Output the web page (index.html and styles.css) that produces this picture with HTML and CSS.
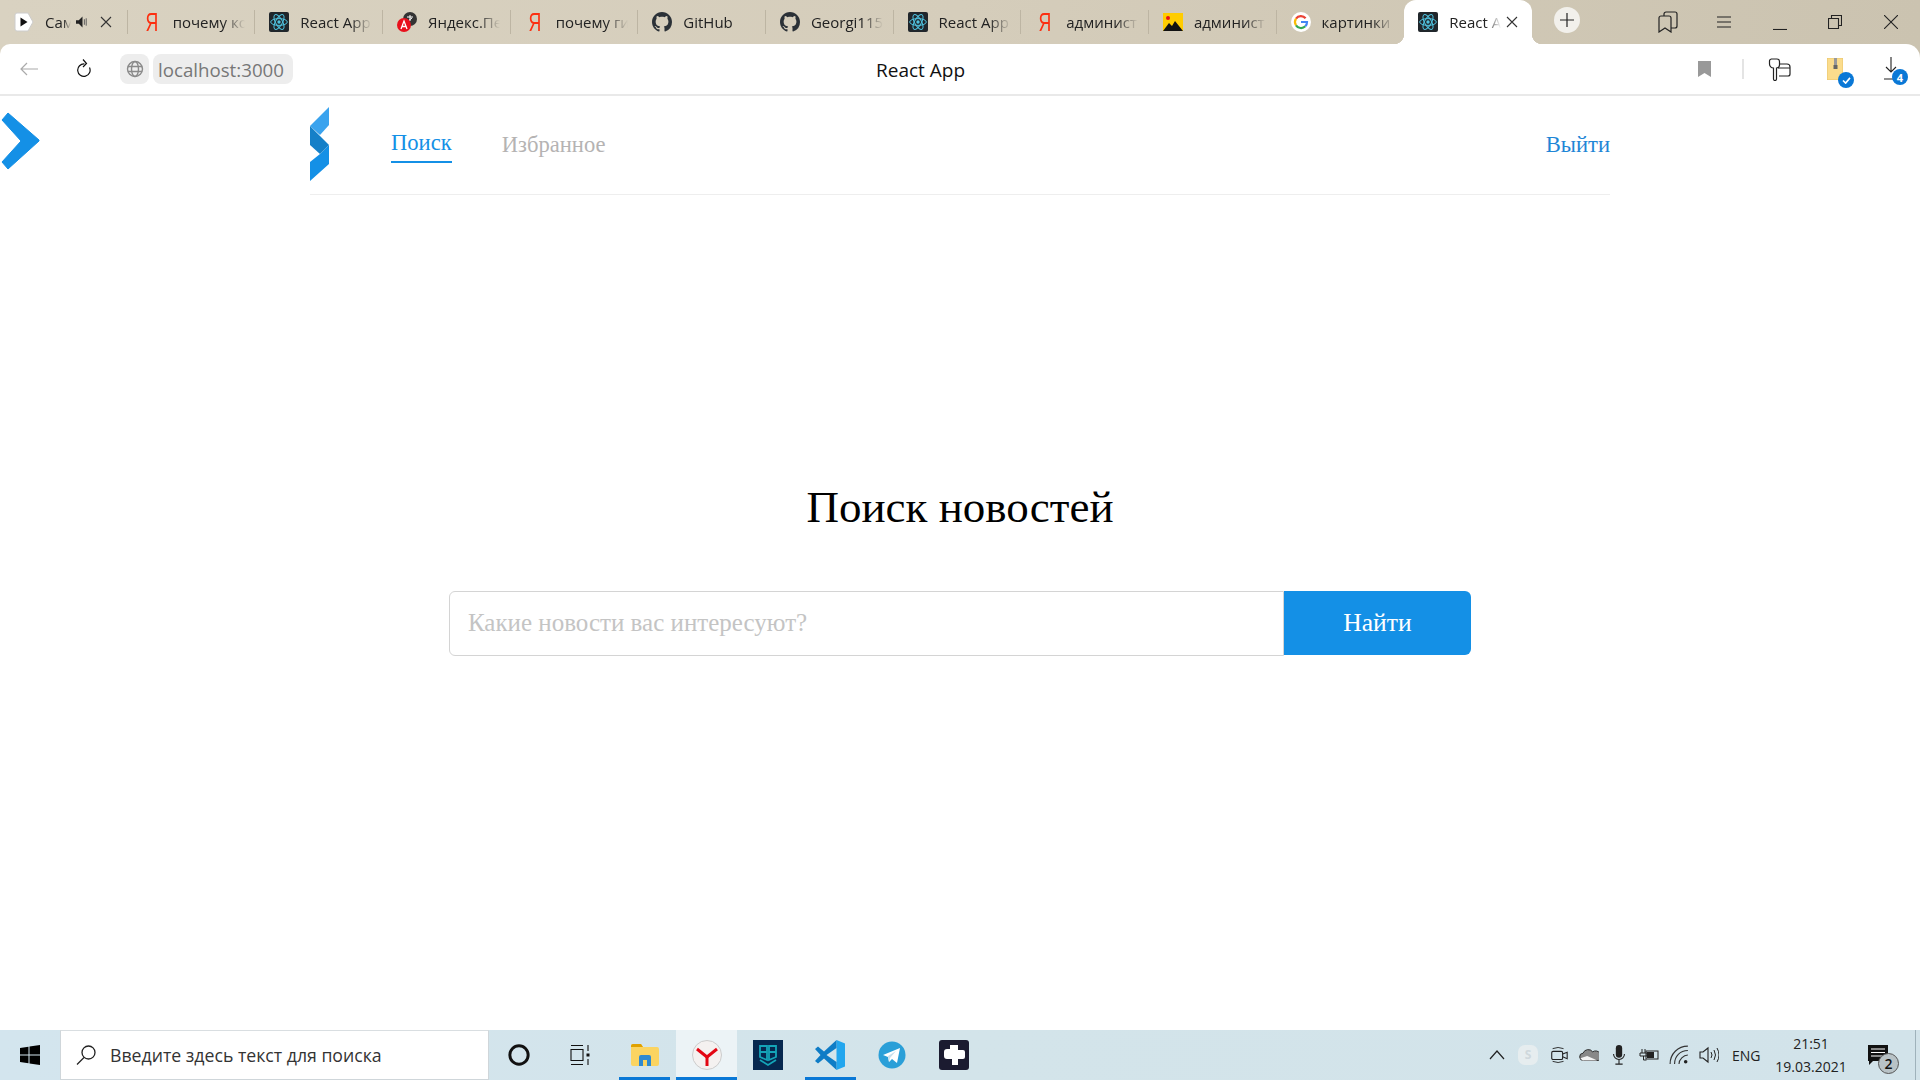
FILE: index.html
```html
<!DOCTYPE html>
<html lang="ru">
<head>
<meta charset="utf-8">
<title>React App</title>
<link rel="stylesheet" href="styles.css">
</head>
<body>
<svg class="defs" width="0" height="0">
  <symbol id="react" viewBox="0 0 20 20">
    <rect width="20" height="20" rx="2" fill="#20262b"/>
    <g fill="none" stroke="#4fc3e0" stroke-width="1">
      <ellipse cx="10" cy="10" rx="8.3" ry="3.4"/>
      <ellipse cx="10" cy="10" rx="8.3" ry="3.4" transform="rotate(60 10 10)"/>
      <ellipse cx="10" cy="10" rx="8.3" ry="3.4" transform="rotate(120 10 10)"/>
    </g>
    <circle cx="10" cy="10" r="1.7" fill="#4fc3e0"/>
  </symbol>
  <symbol id="github" viewBox="0 0 16 16">
    <path fill="#2b3137" d="M8 0C3.58 0 0 3.58 0 8c0 3.54 2.29 6.53 5.47 7.59.4.07.55-.17.55-.38 0-.19-.01-.82-.01-1.49-2.01.37-2.53-.49-2.69-.94-.09-.23-.48-.94-.82-1.13-.28-.15-.68-.52-.01-.53.63-.01 1.08.58 1.23.82.72 1.21 1.87.87 2.33.66.07-.52.28-.87.51-1.07-1.78-.2-3.64-.89-3.64-3.95 0-.87.31-1.59.82-2.15-.08-.2-.36-1.02.08-2.12 0 0 .67-.21 2.2.82.64-.18 1.32-.27 2-.27.68 0 1.36.09 2 .27 1.53-1.04 2.2-.82 2.2-.82.44 1.1.16 1.92.08 2.12.51.56.82 1.27.82 2.15 0 3.07-1.87 3.75-3.65 3.95.29.25.54.73.54 1.48 0 1.07-.01 1.93-.01 2.2 0 .21.15.46.55.38A8.013 8.013 0 0016 8c0-4.42-3.58-8-8-8z"/>
  </symbol>
  <symbol id="close" viewBox="0 0 12 12">
    <path d="M1 1l10 10M11 1L1 11" stroke="#333" stroke-width="1.1" fill="none"/>
  </symbol>
</svg>

<div class="window">
  <div class="tabbar">
    <div class="tabs">
      <div class="tab"><div class="tab-in">
        <svg class="fav" viewBox="0 0 20 20"><path d="M3 1h11l5 9-5 9H3a2 2 0 01-2-2V3a2 2 0 012-2z" fill="#fff" stroke="#ccc"/><path d="M6.5 5.5l7 4.5-7 4.5z" fill="#111"/></svg>
        <span class="tab-title tab-short">Сам</span>
        <svg class="speaker" viewBox="0 0 14 12"><path d="M0 4h3l4-4v12l-4-4H0z" fill="#222"/><path d="M9 3v6M11 2v8" stroke="#555" fill="none"/></svg>
        <svg class="tab-x"><use href="#close"/></svg>
      </div></div>
      <div class="tab"><div class="tab-in"><span class="ya fav">Я</span><span class="tab-title">почему когда</span></div></div>
      <div class="tab"><div class="tab-in"><svg class="fav"><use href="#react"/></svg><span class="tab-title">React App</span></div></div>
      <div class="tab"><div class="tab-in">
        <svg class="fav" viewBox="0 0 20 20"><circle cx="13" cy="7" r="7" fill="#333"/><path d="M10 5h6M13 3v6M11 9l4-3" stroke="#fff" fill="none"/><circle cx="7" cy="13" r="7" fill="#e8101c"/><path d="M4 17l3-8 3 8M5 14.500h4" stroke="#fff" stroke-width="1.300" fill="none"/></svg>
        <span class="tab-title">Яндекс.Переводчик</span></div></div>
      <div class="tab"><div class="tab-in"><span class="ya fav">Я</span><span class="tab-title">почему гит</span></div></div>
      <div class="tab"><div class="tab-in"><svg class="fav"><use href="#github"/></svg><span class="tab-title">GitHub</span></div></div>
      <div class="tab"><div class="tab-in"><svg class="fav"><use href="#github"/></svg><span class="tab-title">Georgi115</span></div></div>
      <div class="tab"><div class="tab-in"><svg class="fav"><use href="#react"/></svg><span class="tab-title">React App</span></div></div>
      <div class="tab"><div class="tab-in"><span class="ya fav">Я</span><span class="tab-title">администратор</span></div></div>
      <div class="tab"><div class="tab-in">
        <svg class="fav" viewBox="0 0 20 20"><rect y="1" width="20" height="18" fill="#ffcc00"/><path d="M0 19l6-8 3 3 3-5 8 10z" fill="#111"/><circle cx="5" cy="6" r="2" fill="#e8101c"/></svg>
        <span class="tab-title">администратор</span></div></div>
      <div class="tab"><div class="tab-in tab-in-last">
        <svg class="fav" viewBox="0 0 20 20"><circle cx="10" cy="10" r="10" fill="#fff"/><path d="M14.600 6.300A6 6 0 005 6.700" stroke="#ea4335" stroke-width="2.200" fill="none"/><path d="M5 6.700a6 6 0 000 6.600" stroke="#fbbc05" stroke-width="2.200" fill="none"/><path d="M5 13.300a6 6 0 009.300 1" stroke="#34a853" stroke-width="2.200" fill="none"/><path d="M14.300 14.300A6 6 0 0016 10h-6" stroke="#4285f4" stroke-width="2.200" fill="none"/></svg>
        <span class="tab-title">картинки</span></div></div>
      <div class="tab tab-active"><div class="tab-in tab-in-last">
        <svg class="fav"><use href="#react"/></svg>
        <span class="tab-title tab-short-active">React App</span>
        <svg class="tab-x"><use href="#close"/></svg>
      </div></div>
    </div>
    <div class="newtab"><svg viewBox="0 0 14 14"><path d="M7 0v14M0 7h14" stroke="#222" stroke-width="1.200"/></svg></div>
    <div class="winctl">
      <div class="wc"><svg viewBox="0 0 20 22" class="wc-i20"><path d="M1 21V7a2 2 0 012-2h8a2 2 0 012 2v14l-6-4z M6 5V3a2 2 0 012-2h9a2 2 0 012 2v12a2 2 0 01-2 2h-4" fill="none" stroke="#222" stroke-width="1.200"/></svg></div>
      <div class="wc"><svg viewBox="0 0 14 12" class="wc-i14"><path d="M0 1h14M0 6h14M0 11h14" stroke="#222" stroke-width="1.100"/></svg></div>
      <div class="wc"><svg viewBox="0 0 14 14" class="wc-min"><path d="M0 13.500h14" stroke="#222" stroke-width="1.100"/></svg></div>
      <div class="wc"><svg viewBox="0 0 14 14" class="wc-i14"><path d="M.5 3.500h10v10H.5zM3.500 3.500v-3h10v10h-3" fill="none" stroke="#222" stroke-width="1.100"/></svg></div>
      <div class="wc"><svg viewBox="0 0 14 14" class="wc-i14"><path d="M0 0l14 14M14 0L0 14" stroke="#222" stroke-width="1.100"/></svg></div>
    </div>
  </div>

  <div class="toolbar">
    <div class="tb-left">
      <svg class="tb-back" viewBox="0 0 18 14"><path d="M18 7H1M7 1L1 7l6 6" fill="none" stroke="#aaa" stroke-width="1.200"/></svg>
      <svg class="tb-reload" viewBox="0 0 16 20"><path d="M12.500 8.500A6.200 6.200 0 1 1 7.500 5" fill="none" stroke="#111" stroke-width="1.200"/><path d="M6 .5L9.500 4.500 6 8" fill="none" stroke="#111" stroke-width="1.200"/></svg>
      <div class="globe-pill"><svg viewBox="0 0 18 18"><g fill="none" stroke="#8a8a8a" stroke-width="1.400"><circle cx="9" cy="9" r="7.500"/><ellipse cx="9" cy="9" rx="3.500" ry="7.500"/><path d="M2 6.500h14M2 11.500h14"/></g></svg></div>
      <div class="url-pill">localhost:3000</div>
    </div>
    <div class="tb-title">React App</div>
    <div class="tb-right">
      <svg class="ic-mark" viewBox="0 0 13 16"><path d="M0 0h13v16l-6.500-4L0 16z" fill="#999"/></svg>
      <div class="tb-sep"></div>
      <svg class="ic-keys" viewBox="0 0 23 23"><path d="M9 6h10a3 3 0 013 3v7a2 2 0 01-2 2h-9M10 10h12" fill="none" stroke="#222" stroke-width="1.200"/><path d="M3 1h6a2.500 2.500 0 012.500 2.500V7a3 3 0 01-3 3v11a1.500 1.500 0 01-3 0V10a4 4 0 01-4-4V3a2 2 0 012-2z" fill="#fff" stroke="#222" stroke-width="1.200"/></svg>
      <div class="ic-zip">
        <svg viewBox="0 0 16 22" class="zip-svg"><rect width="16" height="22" fill="#fbdc8c" stroke="#e8c46c"/><rect x="7" y="0" width="3" height="10" fill="#999"/><rect x="6.500" y="7" width="4" height="4" fill="#666"/></svg>
        <span class="badge"><svg viewBox="0 0 10 8"><path d="M1 4l3 3 5-6" fill="none" stroke="#fff" stroke-width="1.800"/></svg></span>
      </div>
      <div class="ic-dl">
        <svg viewBox="0 0 14 24" class="dl-svg"><path d="M7 0v15M2 10l5 5 5-5M0 22h14" fill="none" stroke="#222" stroke-width="1.100"/></svg>
        <span class="badge badge-num">4</span>
      </div>
    </div>
  </div>

  <div class="page">
    <svg class="side-toggle" viewBox="0 0 40 58"><path d="M8 1l31 27-0 1L8 57l-6-7 19-21L2 8z" fill="#1490e6" stroke="#1490e6" stroke-linejoin="round"/></svg>
    <header class="site-header">
      <svg class="logo" viewBox="0 0 19 74">
        <path d="M19 0v18l-9 10-10-9z" fill="#3aa3ee"/>
        <path d="M19 38v19L0 74V55l10-8z" fill="#1490e6"/>
        <path d="M0 19l19 19-9 9-10-9z" fill="#1580c8"/>
      </svg>
      <nav class="nav">
        <a class="nav-link nav-active">Поиск</a>
        <a class="nav-link">Избранное</a>
      </nav>
      <a class="logout">Выйти</a>
    </header>
    <main class="search">
      <h1 class="search-title">Поиск новостей</h1>
      <form class="search-form">
        <input class="search-input" placeholder="Какие новости вас интересуют?">
        <button class="search-btn" type="button">Найти</button>
      </form>
    </main>
  </div>

  <div class="taskbar">
    <div class="start"><svg viewBox="0 0 20 20"><path d="M0 3l8.500-1.200V9.500H0zM9.500 1.600L20 0v9.500H9.500zM0 10.500h8.500v7.700L0 17zM9.500 10.500H20V20L9.500 18.400z" fill="#000"/></svg></div>
    <div class="tb-search">
      <svg viewBox="0 0 20 20"><circle cx="12.500" cy="7.500" r="6.500" fill="none" stroke="#222" stroke-width="1.300"/><path d="M8 12.500L1 19.500" stroke="#222" stroke-width="1.300"/></svg>
      <span>Введите здесь текст для поиска</span>
    </div>
    <div class="task-slot slot-cortana"><svg class="ic18" viewBox="0 0 18 18"><circle cx="9" cy="9" r="7.500" fill="none" stroke="#111" stroke-width="2.400"/></svg></div>
    <div class="task-slot slot-view"><svg class="ic20" viewBox="0 0 20 20"><path d="M1 .5h12M1 19.500h12M1 4.500h12v11H1zM18 0v6M18 14v6" fill="none" stroke="#111" stroke-width="1.100"/><rect x="16.500" y="8.500" width="3" height="3" fill="#111"/></svg></div>
    <div class="task-slot slot-app slot-ex task-on"><svg class="ic-ex" viewBox="0 0 28 22"><path d="M0 2a2 2 0 012-2h8l2 3h14a2 2 0 012 2v15a2 2 0 01-2 2H2a2 2 0 01-2-2z" fill="#fbd461"/><path d="M0 2a2 2 0 012-2h8l2 3H0z" fill="#e0a100"/><path d="M8 22v-9a2 2 0 012-2h8a2 2 0 012 2v9h-4v-6h-4v6z" fill="#2f8ad1"/></svg></div>
    <div class="task-slot slot-ya task-on task-hover"><svg class="ic30" viewBox="0 0 30 30"><circle cx="15" cy="15" r="14.500" fill="#f4f1f0" stroke="#ccc"/><path d="M5 9l10 8 10-8" fill="none" stroke="#e30613" stroke-width="3"/><path d="M15 16v10" stroke="#e30613" stroke-width="3"/></svg></div>
    <div class="task-slot slot-app"><svg class="ic30" viewBox="0 0 30 30"><rect width="30" height="30" fill="#06284f"/><path d="M7 6h7v14l-7-3zM16 6h7v11l-7 3zM7 12h7M16 12h7M7 20l8 5 8-5" fill="none" stroke="#14a5b8" stroke-width="1.800"/></svg></div>
    <div class="task-slot slot-app task-on"><svg class="ic30" viewBox="0 0 30 30"><path d="M21.500 0L30 3.500v23L21.500 30z" fill="#22a6ee"/><path d="M21.500 0v8l-10 7 10 7v8L9 18.500 3 23.500 0 21l5.500-6L0 9l3-2.500 6 5z" fill="#0e7cc6"/></svg></div>
    <div class="task-slot slot-app"><svg class="ic28" viewBox="0 0 28 28"><circle cx="14" cy="14" r="13.500" fill="#2a9fd8"/><path d="M5 14l17-7-3 15-5-4-3 3-1-5z" fill="#fff"/><path d="M11 21l-1-6 8-5-6 7z" fill="#c8dfec"/></svg></div>
    <div class="task-slot slot-app"><svg class="ic30" viewBox="0 0 30 30"><rect width="30" height="30" rx="3" fill="#1b1b30"/><path d="M11 5h8v5h5a2 2 0 012 2v5a2 2 0 01-2 2h-5v6h-6v-6H8a3 3 0 01-3-3v-4a3 3 0 013-3h3z" fill="#fff"/></svg></div>

    <div class="tray">
      <svg class="t-chev" viewBox="0 0 16 10"><path d="M1 9l7-8 7 8" fill="none" stroke="#222" stroke-width="1.200"/></svg>
      <div class="t-skype">S</div>
      <svg class="t-ic" viewBox="0 0 20 22"><path d="M3 4a8 3 0 0112 0M3 18a8 3 0 0012 0" fill="none" stroke="#222"/><rect x="2" y="7" width="12" height="9" rx="1.500" fill="none" stroke="#222" stroke-width="1.200"/><path d="M14 10l5-2v7l-5-2" fill="none" stroke="#222" stroke-width="1.200"/></svg>
      <svg class="t-ic" viewBox="0 0 22 14"><path d="M5 13a4 4 0 01-.500-8A6 6 0 0115 3.500a5 5 0 016.500 9.500z" fill="#888" stroke="#222"/><path d="M1.500 10.500L9 8l7 3 4 2H4z" fill="#f4f4f4"/></svg>
      <svg class="t-ic" viewBox="0 0 14 22"><rect x="3.500" y="0" width="7" height="14" rx="3.500" fill="#222"/><path d="M1 10a6 6 0 0012 0M7 16v5M3 21h8" fill="none" stroke="#222" stroke-width="1.200"/></svg>
      <svg class="t-ic" viewBox="0 0 20 14"><path d="M3 1v4M6 1v4M1 5h7v3H1zM4.500 8v4h3" fill="none" stroke="#222"/><rect x="7" y="3" width="12" height="8" fill="none" stroke="#222"/><rect x="8" y="4" width="7" height="6" fill="#222"/></svg>
      <svg class="t-ic" viewBox="0 0 18 18"><path d="M1 17C1 8 8 1 17 1M5 17C5 10 10 5 17 5M9 17c0-4 4-8 8-8" fill="none" stroke="#333"/><circle cx="15" cy="15" r="1.600" fill="#222"/></svg>
      <svg class="t-ic" viewBox="0 0 20 18"><path d="M1 6h3l5-4v14l-5-4H1z" fill="none" stroke="#222" stroke-width="1.100"/><path d="M12 6q2 3 0 6M15 4q3 5 0 10M18 2q4 7 0 14" fill="none" stroke="#222"/></svg>
      <span class="t-lang">ENG</span>
      <div class="t-clock"><span>21:51</span><span>19.03.2021</span></div>
      <div class="t-note">
        <svg viewBox="0 0 20 20"><path d="M0 0h20v16H5l-4 4v-4H0z" fill="#111"/><path d="M3 4h14M3 7.500h14M3 11h14" stroke="#fff"/></svg>
        <span class="t-count">2</span>
      </div>
      <div class="t-show"></div>
    </div>
  </div>
</div>
</body>
</html>
```

FILE: styles.css
```css
* { box-sizing: border-box; }
html, body { margin: 0; padding: 0; height: 100%; overflow: hidden; background: #fff; }
.defs { position: absolute; }
.window {
  width: 1920px; height: 1080px; display: flex; flex-direction: column;
  font-family: "Open Sans", "Noto Sans", sans-serif;
  background: linear-gradient(90deg, #d9d2c1 0%, #d5cdbb 50%, #cbc3b0 100%);
}

/* tab strip */
.tabbar { height: 44px; display: flex; flex: none; }
.tabs { display: flex; width: 1532px; flex: none; }
.tab { width: 127.670px; flex: none; height: 44px; display: flex; align-items: center; }
.tab-in {
  width: 100%; height: 24px; display: flex; align-items: center;
  border-right: 1px solid #bdb5a3; padding-left: 14px; margin-top: -1px;
}
.tab-in-last { border-right: none; }
.fav { width: 20px; height: 20px; flex: none; }
.ya {
  color: #fc2f10; font: 26px/20px "Liberation Sans", sans-serif; text-align: center; display: block;
  transform: scaleX(.68);
}
.tab-title {
  flex: none; overflow: hidden; white-space: nowrap;
  font-size: 15px; color: #222;
  -webkit-mask-image: linear-gradient(90deg, #000 70%, transparent 100%);
  mask-image: linear-gradient(90deg, #000 70%, transparent 100%);
}
.tab-in .fav + .tab-title { margin-left: 11px; width: 72px; }
.tab-in .fav + .tab-short { margin-left: 11px; width: 26px; }
.speaker { width: 13px; height: 12px; flex: none; margin-left: 5px; }
.tab-x { width: 12px; height: 12px; flex: none; margin-left: 11px; }
.tab-active { background: #fff; border-radius: 12px 12px 0 0; position: relative; width: 128px; }
.tab-active::before, .tab-active::after {
  content: ""; position: absolute; bottom: 0; width: 10px; height: 10px;
}
.tab-active::before { left: -10px; background: radial-gradient(circle at 0 0, transparent 10px, #fff 10.500px); }
.tab-active::after { right: -10px; background: radial-gradient(circle at 100% 0, transparent 10px, #fff 10.500px); }
.tab-active .tab-in { padding-left: 14px; }
.tab-active .fav + .tab-short-active { margin-left: 11px; width: 52px; }
.tab-active .tab-x { margin-left: 5px; }
.newtab {
  width: 26px; height: 26px; border-radius: 50%; background: #f2f0eb; margin: 7px 0 0 22px;
  display: flex; align-items: center; justify-content: center; flex: none;
}
.newtab svg { width: 14px; height: 14px; }
.winctl { margin-left: auto; padding-right: 1px; display: flex; height: 44px; }
.wc { width: 55.700px; display: flex; align-items: center; justify-content: center; }
.wc-i20 { width: 20px; height: 22px; }
.wc-i14 { width: 14px; height: 14px; }
.wc-min { width: 14px; height: 14px; margin-top: 2px; }

/* toolbar */
.toolbar {
  height: 52px; flex: none; background: #fff; border-radius: 10px 14px 0 0;
  border-bottom: 2px solid #e9e9e9; display: flex; align-items: center;
}
.tb-left { width: 876px; display: flex; align-items: center; flex: none; padding-left: 20px; }
.tb-back { width: 18px; height: 14px; flex: none; }
.tb-reload { width: 16px; height: 20px; flex: none; margin-left: 39px; }
.globe-pill {
  width: 29px; height: 30px; border-radius: 8px; background: #ededed; margin-left: 27px;
  display: flex; align-items: center; justify-content: center; flex: none;
}
.globe-pill svg { width: 18px; height: 18px; }
.url-pill {
  width: 140px; height: 30px; background: #ededed; border-radius: 8px; margin-left: 4px;
  font-size: 18.700px; line-height: 31px; color: #777; padding-left: 5px; white-space: nowrap;
}
.tb-title { font-size: 19px; line-height: 28px; padding-top: 1px; color: #111; white-space: nowrap; }
.tb-right { margin-left: auto; display: flex; align-items: center; padding-right: 10px; }
.ic-mark { width: 13px; height: 16px; flex: none; }
.tb-sep { width: 2px; height: 20px; background: #e4e4e4; margin-left: 31px; }
.ic-keys { width: 23px; height: 23px; flex: none; margin-left: 24px; }
.ic-zip { position: relative; margin-left: 36px; width: 16px; height: 22px; }
.zip-svg { width: 16px; height: 22px; display: block; }
.ic-dl { position: relative; margin-left: 41px; width: 14px; height: 24px; margin-right: 12px; }
.dl-svg { width: 14px; height: 24px; display: block; }
.badge {
  position: absolute; width: 16px; height: 16px; border-radius: 50%; background: #0a78d6;
  left: 11px; top: 14px; display: flex; align-items: center; justify-content: center;
  color: #fff; font-size: 11px; font-weight: 700;
}
.badge svg { width: 9px; height: 7px; }
.badge-num { left: 8px; top: 12px; }

/* page */
.page { flex: 1; background: #fff; position: relative; font-family: "Liberation Serif", serif; display: flex; flex-direction: column; min-height: 0; }
.side-toggle { position: absolute; left: 0; top: 16px; width: 40px; height: 58px; }
.site-header {
  width: 1300px; margin: 0 auto; height: 99px; flex: none; border-bottom: 1px solid #eee;
  display: flex; align-items: flex-start; padding-top: 11px;
}
.logo { width: 19px; height: 74px; flex: none; }
.nav { display: flex; gap: 50px; margin-left: 62px; margin-top: 24px; }
.nav-link { font-size: 22.600px; line-height: 26px; color: #b5b3b3; height: 36px; padding-top: 1px; }
.nav-active { color: #1490e6; border-bottom: 2px solid #1490e6; height: 34px; margin-top: -2px; }
.logout { margin-left: auto; font-size: 22.600px; line-height: 26px; color: #1f86d6; margin-top: 25px; }
.search { display: flex; flex-direction: column; align-items: center; padding-top: 286px; }
.search-title { margin: 0; font-size: 45px; line-height: 52px; font-weight: 400; color: #000; }
.search-form { display: flex; margin-top: 58px; width: 1022px; height: 65px; align-items: flex-start; }
.search-input {
  flex: 1; min-width: 0; height: 65px; border: 1px solid #d4d4d4; border-radius: 6px 0 0 6px;
  font: 25px "Liberation Serif", serif; padding: 0 18px 2px; outline: none; background: #fff;
}
.search-input::placeholder { color: #c4c4c4; opacity: 1; }
.search-btn {
  width: 187px; flex: none; height: 64px; border: 0; background: #1490e6; color: #fff;
  border-radius: 0 6px 6px 0; font: 400 25.600px "Liberation Serif", serif; padding: 0;
}

/* taskbar */
.taskbar {
  height: 50px; flex: none; display: flex; align-items: stretch;
  background: linear-gradient(90deg, #d3e5ee 0%, #d3e4ea 50%, #d2e3ea 100%);
}
.start { width: 60px; display: flex; align-items: center; justify-content: center; flex: none; }
.start svg { width: 20px; height: 20px; }
.tb-search {
  width: 429px; flex: none; background: #fff; border: 1px solid #cfd6da; border-top-color: #d9dee1;
  display: flex; align-items: center; padding-left: 15px;
}
.tb-search svg { width: 20px; height: 20px; flex: none; }
.tb-search span { margin-left: 14px; font-size: 17.700px; color: #333; white-space: nowrap; }
.task-slot { display: flex; align-items: center; justify-content: center; flex: none; }
.slot-cortana { width: 60px; }
.slot-view { width: 62px; margin-right: 8px; }
.slot-app { width: 51px; margin-right: 11px; border-bottom: 3px solid transparent; padding-top: 2px; }
.slot-ex { margin-right: 6px; }
.slot-ya { width: 61px; margin-right: 5.500px; border-bottom: 3px solid transparent; padding-top: 2px; }
.task-on { border-bottom-color: #0a78d6; }
.task-hover { background: #ecf3f6; }
.ic18 { width: 22px; height: 22px; }
.ic20 { width: 20px; height: 20px; }
.ic-ex { width: 28px; height: 22px; }
.ic30 { width: 30px; height: 30px; }
.ic28 { width: 28px; height: 28px; }

.tray { margin-left: auto; display: flex; align-items: center; height: 50px; }
.t-chev { width: 16px; height: 10px; flex: none; margin-right: 13px; }
.t-skype {
  width: 20px; height: 20px; border-radius: 7px; background: #e6edef; color: #cfd8dc;
  font: 700 12px/20px "Open Sans", sans-serif; text-align: center; flex: none; margin-right: 11px;
}
.t-ic { width: 20px; height: 20px; flex: none; margin-right: 10px; }
.t-lang { font-size: 14px; color: #222; margin-left: 3px; width: 27px; flex: none; }
.t-clock {
  width: 90px; flex: none; margin-left: 7px; display: flex; flex-direction: column; align-items: center;
  font-size: 14px; line-height: 23px; color: #222;
}
.t-note { position: relative; width: 20px; height: 20px; margin-left: 12px; flex: none; }
.t-note svg { width: 20px; height: 20px; display: block; }
.t-count {
  position: absolute; left: 10px; top: 8px; width: 21px; height: 21px; border-radius: 50%;
  background: #b8c2c6; border: 1px solid #555; color: #111; font-size: 14px; font-weight: 600;
  display: flex; align-items: center; justify-content: center;
}
.t-show { width: 1px; height: 50px; background: #9fb2bb; margin-left: 27px; margin-right: 4px; flex: none; }
```
